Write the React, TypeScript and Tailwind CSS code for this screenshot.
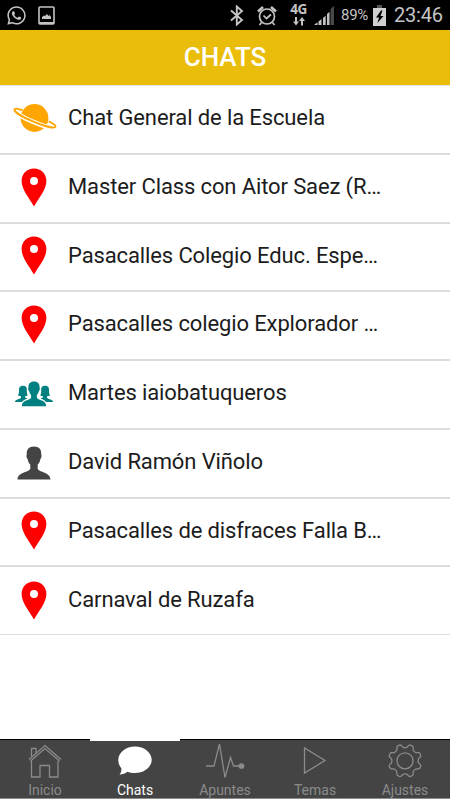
import type { ReactNode } from "react";
import { FaWhatsapp } from "react-icons/fa";

const Planet = () => (
  <svg className="ml-[3px]" width="46" height="32" viewBox="0 0 46 32" fill="none">
    <circle cx="22.500" cy="16" r="13.900" fill="#ffa500" />
    <g transform="rotate(23 23 16)">
      <path d="M1 16c0 2.900 9.500 4.300 22 4.300S45 18.900 45 16" stroke="white" strokeWidth="4.600" />
      <path
        d="M8.500 13.800C4 14 .8 14.700.8 16c0 2.400 9.700 4 22.200 4s22.200-1.600 22.200-4c0-1.300-3-2-8.200-2.200"
        stroke="#ffa500"
        strokeWidth="2"
      />
    </g>
  </svg>
);

const Pin = () => (
  <svg width="26" height="39" viewBox="0 0 26 39">
    <path
      d="M13 .5C6 .5.600 5.700.600 12.800c0 9 7.400 17 12.400 25.700 5-8.700 12.400-16.700 12.400-25.700C25.400 5.700 20 .5 13 .5Zm0 8.400a4 4 0 1 1 0 8 4 4 0 0 1 0-8Z"
      fill="red"
      fillRule="evenodd"
    />
  </svg>
);

const sidePerson =
  "M8 4.800c-3 0-4.300 1.700-4 4.500 0 2.500-.2 3.700-1 5.200 1 .6 2 .7 3 .7v1.600C5 18.600.2 18 0 21h7c1.400-1.900 3.700-2.700 5.700-3.500-1.300-.4-2.400-.8-2.700-1.200v-1.100c1 0 2-.1 2.800-.6-.8-1.500-1-3-1-5.300.3-2.800-.8-4.500-3.800-4.500Z";

const People = () => (
  <svg className="mt-[2px]" width="38" height="26" viewBox="0 0 38 26" fill="#008080">
    <path d={sidePerson} />
    <path transform="matrix(-1 0 0 1 38 0)" d={sidePerson} />
    <path
      d="M19 .5c-3.800 0-5.900 2.300-5.500 6-.7.500-.3 3 .6 3.500.4 2 1.200 3.200 2 4v2.800c-1 2.700-9.300 1.900-9.300 8.400h24.400c0-6.500-8.300-5.700-9.300-8.400V14c.8-.8 1.600-2 2-4 .9-.5 1.300-3 .6-3.500.4-3.700-1.700-6-5.500-6Z"
      stroke="white"
      strokeWidth="1.200"
      paintOrder="stroke"
    />
  </svg>
);

const Person = () => (
  <svg className="mt-[2px]" width="34" height="34" viewBox="0 0 34 34" fill="#444">
    <path d="M17 .5c-5.100 0-7.600 3-7.200 7.700-.7.700-.4 4 .8 4.700.5 3 1.500 4.500 2.700 5.600v4.200c-1.500 4-12.600 3-12.800 10.800h33c-.2-7.800-11.300-6.800-12.800-10.800v-4.200c1.200-1.100 2.200-2.600 2.700-5.600 1.200-.7 1.500-4 .8-4.700.4-4.700-2.100-7.700-7.200-7.700Z" />
  </svg>
);

const icons = { planet: Planet, pin: Pin, people: People, person: Person };

const chats: { icon: keyof typeof icons; name: string }[] = [
  { icon: "planet", name: "Chat General de la Escuela" },
  { icon: "pin", name: "Master Class con Aitor Saez (R…" },
  { icon: "pin", name: "Pasacalles Colegio Educ. Espe…" },
  { icon: "pin", name: "Pasacalles colegio Explorador …" },
  { icon: "people", name: "Martes iaiobatuqueros" },
  { icon: "person", name: "David Ramón Viñolo" },
  { icon: "pin", name: "Pasacalles de disfraces Falla B…" },
  { icon: "pin", name: "Carnaval de Ruzafa" },
];

const StatusBar = () => (
  <div className="flex h-[30px] shrink-0 items-center bg-black text-[#c4c4c4]">
    <FaWhatsapp className="ml-[6px] size-[21px]" />
    <svg className="ml-[11px]" width="17" height="19" viewBox="0 0 17 19" fill="none">
      <rect x="1" y="1" width="15" height="17" rx="1" stroke="currentColor" strokeWidth="1.600" />
      <path d="M1 16h15v2H1zM4 13v-2l2-1.500 1 .5L9 8l1.500 2 1-1 1.500 2v2Z" fill="currentColor" />
    </svg>
    <svg className="ml-auto" width="14" height="21" viewBox="0 0 14 21" fill="none" stroke="currentColor" strokeWidth="1.900">
      <path d="M1 5.500l11 9.500-5.200 4.500V1.500L12 6 1 15.500" />
    </svg>
    <svg className="ml-[13px]" width="20" height="21" viewBox="0 0 20 21" fill="none" stroke="currentColor" strokeWidth="1.700">
      <circle cx="10" cy="11.500" r="7.500" />
      <path d="M6.500 10.500l3 3 4.500-4M4.500 17.500l-2 2.500M15.500 17.500l2 2.500" />
      <path d="M1 6.500L6 2M19 6.500L14 2" strokeWidth="2.600" />
    </svg>
    <div className="ml-[13px] flex h-[22px] w-[17px] flex-col items-center justify-between">
      <span className="font-['Open_Sans',sans-serif] text-[13.500px] leading-[10px] font-bold tracking-[-0.500px]">4G</span>
      <svg width="12" height="9" viewBox="0 0 12 9" fill="currentColor">
        <path d="M2 0h2v4.500h2L3 8.500 0 4.500h2zM8 8.500h2V4h2L9 0 6 4h2z" />
      </svg>
    </div>
    <svg className="ml-[7px]" width="20" height="21" viewBox="0 0 20 21" fill="currentColor">
      <path d="M0 20l3.500-2.700V20zM4.500 16.500l3-2.500v6h-3zM9 13l2.700-2.300V20H9zM13 9l2.500-2.200V20H13z" />
      <path d="M16.500 4L20 1v19h-3.500z" fill="#484848" />
    </svg>
    <span className="ml-[7px] w-[27px] text-[15px] leading-[30px] tracking-[-0.300px]">89%</span>
    <svg className="ml-[5px]" width="13" height="21" viewBox="0 0 13 21">
      <path d="M4 0h5v3H4z" fill="#555" />
      <path d="M0 3h13v18H0z" fill="#d0d0d0" />
      <path d="M8 5.500l-5 7h3l-1.500 5.500 6-7H7.500l2-5.500z" fill="black" />
    </svg>
    <span className="mr-[7px] ml-[8px] w-[49px] text-[20px] leading-[30px] tracking-[-0.200px] whitespace-nowrap">23:46</span>
  </div>
);

// Cog outline: eight teeth, the first one turned half a step off the vertical
const cogPath = Array.from({ length: 8 }, (_, i) => {
  const point = (radius: number, degrees: number) => {
    const angle = ((i * 45 + degrees) * Math.PI) / 180;
    return `${(18 + radius * Math.sin(angle)).toFixed(2)} ${(18 - radius * Math.cos(angle)).toFixed(2)}`;
  };
  return `${i ? "L" : "M"}${point(13.6, 8)}L${point(15.7, 14)}Q${point(16.7, 16)} ${point(16.6, 19)}L${point(16.6, 26)}Q${point(16.7, 29)} ${point(15.7, 31)}L${point(13.6, 37)}Q${point(12.8, 45)} ${point(13.6, 53)}`;
}).join("");

const tabs: { label: string; icon: ReactNode; active?: boolean }[] = [
  {
    label: "Inicio",
    icon: (
      <>
        <path d="M2 17.500L18 3.500l16 14M4.500 19V35H13V23.500h9.500V35H31V19" />
        <path d="M3.500 19L18 6.500 32.500 19M4.500 14.500V6.500H9V11" />
      </>
    ),
  },
  {
    label: "Chats",
    active: true,
    icon: (
      <path
        fill="white"
        stroke="none"
        d="M18 4.500c9.200 0 16.700 6 16.700 13.300S27.200 31 18 31c-3 0-5.500-.4-7.700-1.200C8.300 31.500 5.500 32.500 2.500 32.700c1.500-1.900 2.200-4 1.800-6.400-2-2.400-3-5.400-3-8.500C1.300 10.500 8.800 4.500 18 4.500Z"
      />
    ),
  },
  {
    label: "Apuntes",
    icon: (
      <>
        <path d="M-1 24h8L12.500 2 18 35.500l5.500-20L26.500 24h8" />
        <circle cx="34.500" cy="24" r="2.200" fill="currentColor" />
      </>
    ),
  },
  { label: "Temas", icon: <path d="M7.500 6v25L28 18.500Z" /> },
  {
    label: "Ajustes",
    icon: (
      <g transform="translate(0 .8)">
        <circle cx="18" cy="18" r="8" />
        <path d={`${cogPath}Z`} strokeLinejoin="round" />
      </g>
    ),
  },
];

export default function App() {
  return (
    <main className="flex h-[800px] w-[450px] flex-col overflow-hidden bg-white font-[Roboto,sans-serif]">
      <StatusBar />
      <header className="h-[55px] shrink-0 bg-[#eabd0a] text-center text-[26px] leading-[55px] font-medium text-white">
        CHATS
      </header>

      <ul className="flex-1 border-t border-[#e4e4e4]">
        {chats.map(({ icon, name }) => {
          const Icon = icons[icon];
          return (
            <li
              key={name}
              className="flex h-[68.750px] items-center border-b-2 border-[#dcdcdc] pb-[2px] last:h-[67.500px] last:border-b last:pb-px"
            >
              <span className="flex w-[67px] shrink-0 justify-center">
                <Icon />
              </span>
              <span className="ml-px pb-[1.500px] text-[22px] tracking-[-0.120px] whitespace-nowrap text-[#1c1c1c]">
                {name}
              </span>
            </li>
          );
        })}
      </ul>

      <nav className="mb-px flex h-[60px] shrink-0 border-b border-[#8c8c8c] bg-[#444]">
        {tabs.map(({ label, icon, active }) => (
          <button
            key={label}
            className={
              active
                ? "flex w-[90px] flex-col items-center border-t-2 border-white pt-px text-white"
                : "flex w-[90px] flex-col items-center border-t border-black pt-[2px] text-[#8b8b8b]"
            }
          >
            <svg className="overflow-visible" width="36" height="38" viewBox="0 0 36 38" fill="none" stroke="currentColor" strokeWidth="1.300">
              {icon}
            </svg>
            <span className="pt-px text-[14px] leading-[18px]">{label}</span>
          </button>
        ))}
      </nav>
    </main>
  );
}
